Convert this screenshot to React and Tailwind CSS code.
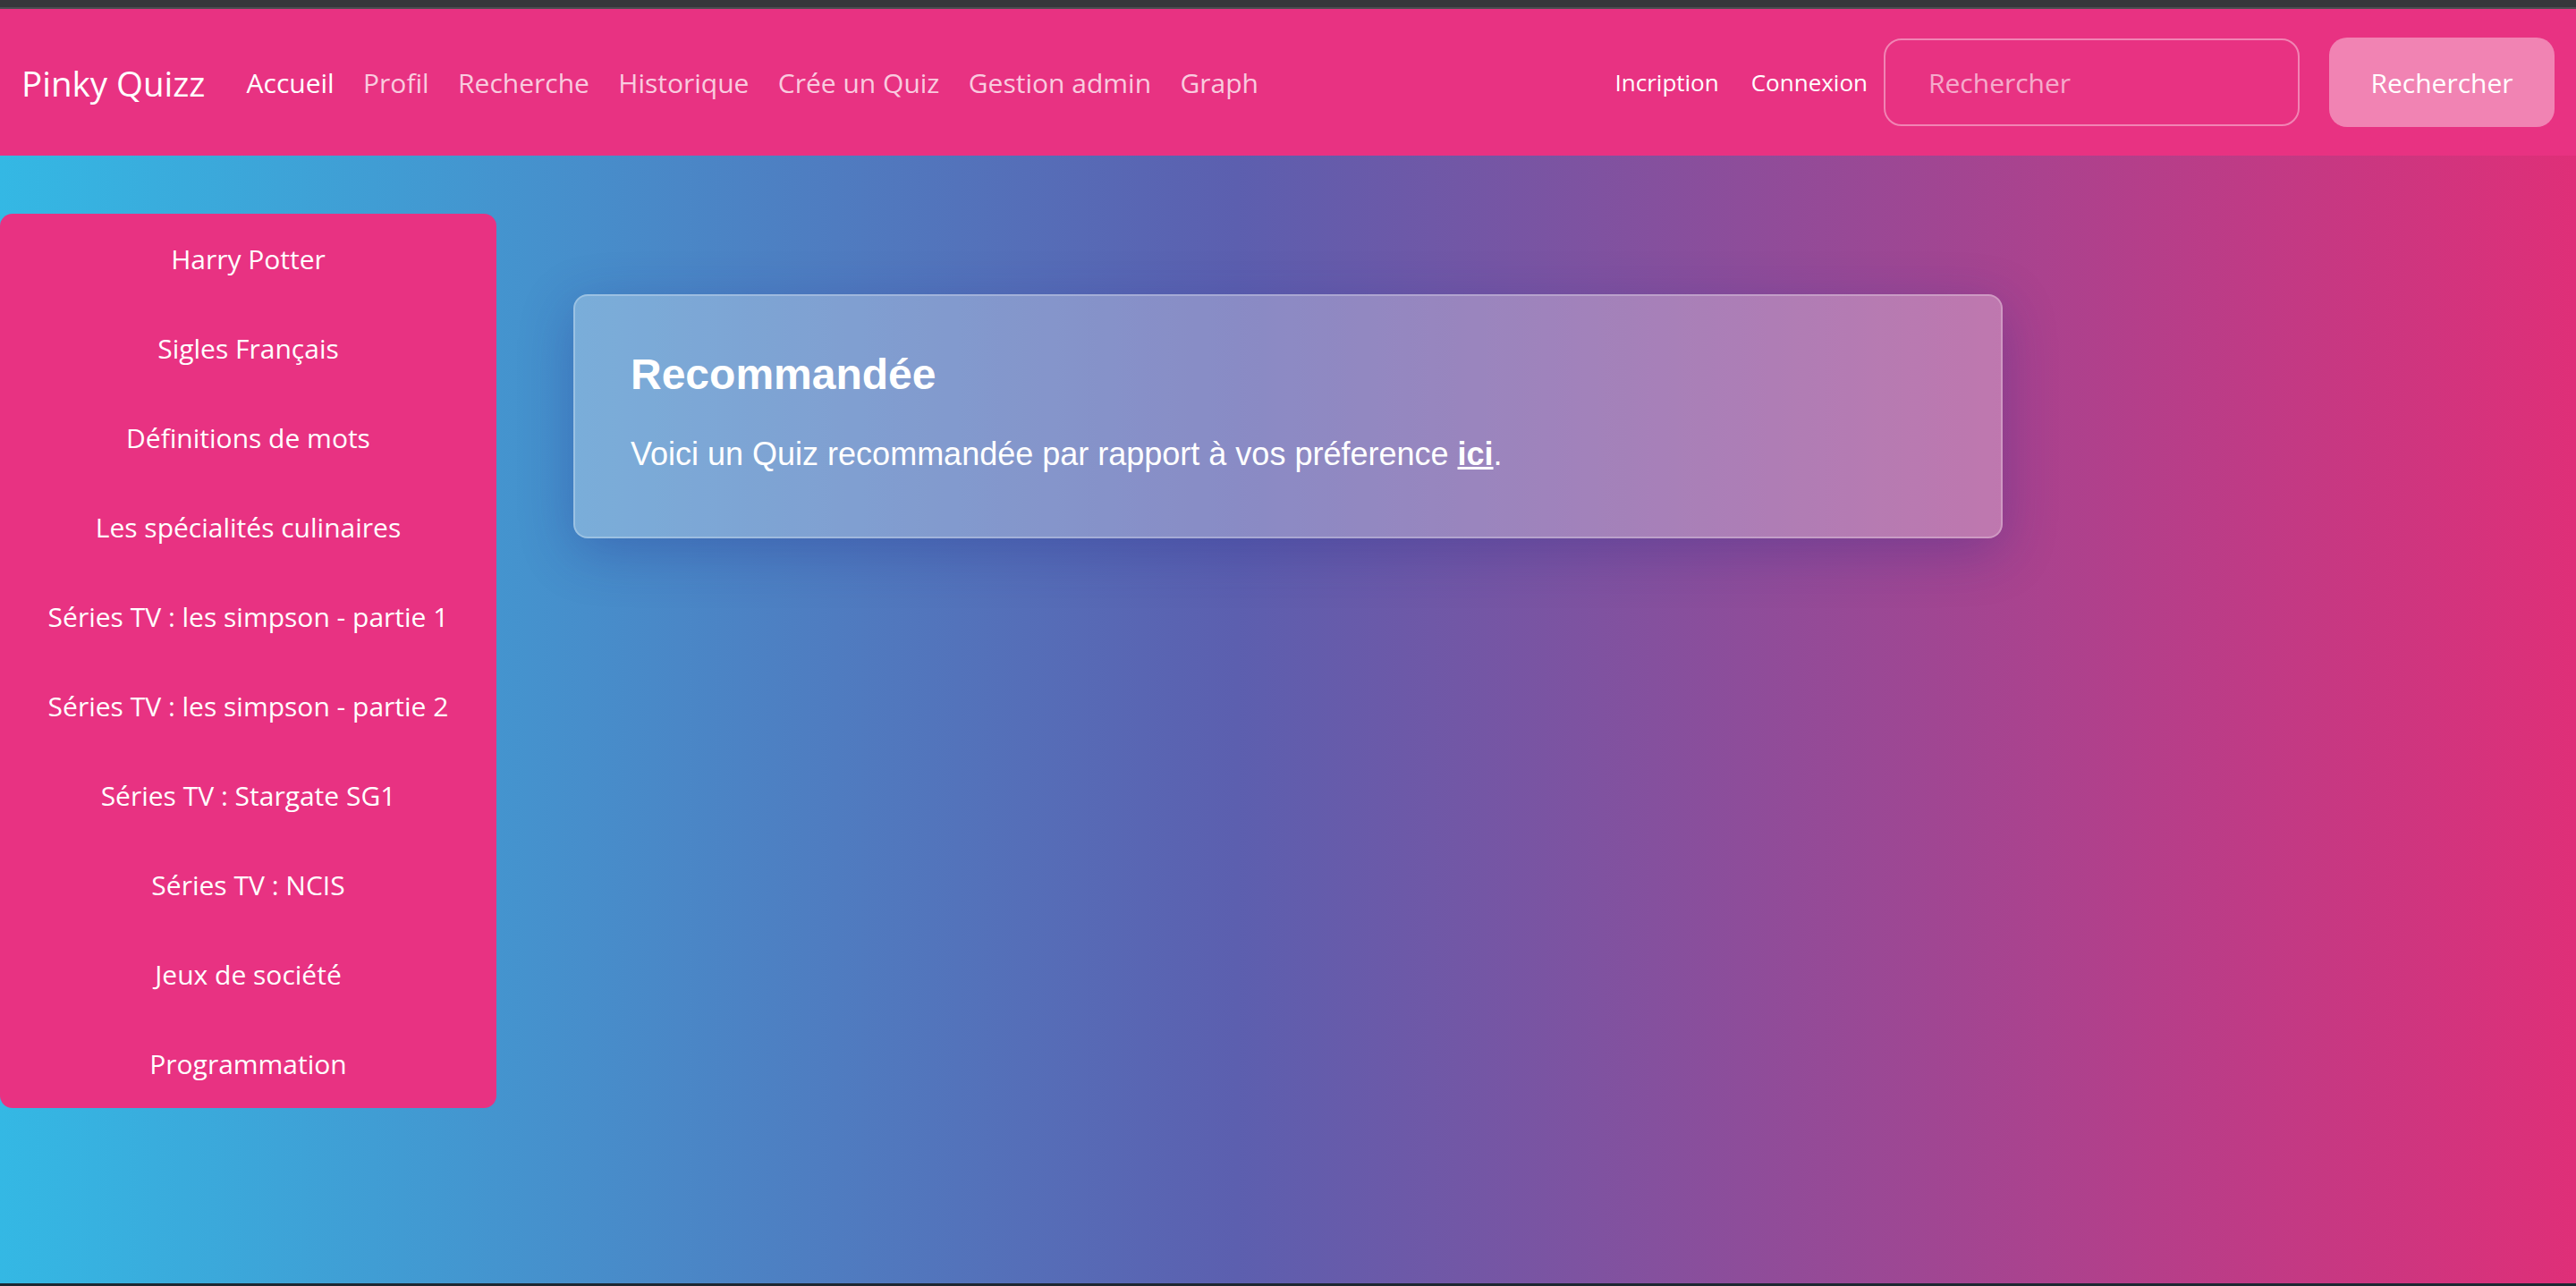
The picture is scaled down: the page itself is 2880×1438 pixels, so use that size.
const menuLinks = [
  { label: "Accueil", active: true },
  { label: "Profil" },
  { label: "Recherche" },
  { label: "Historique" },
  { label: "Crée un Quiz" },
  { label: "Gestion admin" },
  { label: "Graph" },
];

const quizzes = [
  "Harry Potter",
  "Sigles Français",
  "Définitions de mots",
  "Les spécialités culinaires",
  "Séries TV : les simpson - partie 1",
  "Séries TV : les simpson - partie 2",
  "Séries TV : Stargate SG1",
  "Séries TV : NCIS",
  "Jeux de société",
  "Programmation",
];

const Navbar = () => {
  return (
    <nav className="h-[164px] bg-[#e83282] flex items-center pl-[24px] pr-[24px] pt-[3px]">
      <a className="text-[38.5px] text-white mr-[30px] leading-none cursor-pointer">
        Pinky Quizz
      </a>
      <ul className="flex items-center">
        {menuLinks.map((link) => (
          <li key={link.label}>
            <a
              className={`px-[16.2px] text-[30px] leading-none cursor-pointer ${
                link.active ? "text-white" : "text-white/75"
              }`}
            >
              {link.label}
            </a>
          </li>
        ))}
      </ul>

      <div className="ml-auto flex items-center -mt-[3px]">
        <a className="px-[18px] text-[26px] text-white cursor-pointer">Incription</a>
        <a className="px-[18px] text-[26px] text-white cursor-pointer">Connexion</a>
        <input
          type="search"
          placeholder="Rechercher"
          className="w-[465px] h-[98px] border-2 border-white/40 rounded-[20px] bg-transparent pl-[48px] text-[30px] text-white placeholder:text-white/60 outline-none"
        />
        <button className="ml-[33px] w-[252px] h-[100px] rounded-[20px] bg-[#f183b3] text-white text-[30px]">
          Rechercher
        </button>
      </div>
    </nav>
  );
};

export default function App() {
  return (
    <div className="min-h-screen flex flex-col font-['Open_Sans',sans-serif]">
      {/* bande sombre du haut */}
      <div className="h-[10px] bg-[#36373b] border-b-2 border-[#4c4d51]" />

      <Navbar />

      <main className="flex-1 flex items-start pt-[65px] bg-[linear-gradient(to_right,#34b8e4,#5c5faf_48%,#df2f78)]">
        <aside className="w-[555px] bg-[#e83282] rounded-[14px] flex flex-col">
          {quizzes.map((quiz) => (
            <a
              key={quiz}
              className="h-[100px] flex items-center justify-center text-[30px] text-white cursor-pointer"
            >
              {quiz}
            </a>
          ))}
        </aside>

        <section className="ml-[86px] mt-[90px] w-[1598px] bg-white/28 border-2 border-white/25 rounded-[16px] shadow-[0_15px_60px_rgba(31,38,135,0.3)] pt-[60px] pb-[72px] px-[62px] font-['Liberation_Sans',Arial,sans-serif] text-white">
          <h2 className="text-[48px] leading-[55px] font-bold mb-[41px]">Recommandée</h2>
          <p className="text-[36px] leading-[41px]">
            Voici un Quiz recommandée par rapport à vos préference{" "}
            <a className="font-bold underline cursor-pointer">ici</a>.
          </p>
        </section>
      </main>

      <div className="h-[3px] bg-[#1d2731]" />
    </div>
  );
}
